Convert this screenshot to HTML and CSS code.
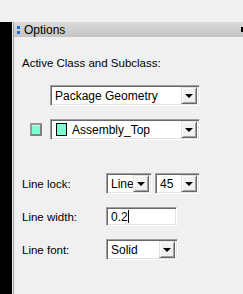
FILE: index.html
```html
<!DOCTYPE html>
<html lang="en">
<head>
  <meta charset="UTF-8" />
  <title>Options</title>
  <link rel="stylesheet" href="styles.css">
</head>
<body>
  <div class="topbar"></div>
  <div class="main">
    <div class="sidebar"></div>
    <div class="divider"></div>
    <div class="panel">
      <div class="panel-header">
        <span class="grip"><i></i><i></i></span>
        <span class="title">Options</span>
        <span class="pin"></span>
      </div>

      <div class="panel-body">
        <p class="section-label">Active Class and Subclass:</p>

        <div class="class-row">
          <div class="combo combo-wide">
            <span class="combo-text">Package Geometry</span>
            <span class="combo-btn"><b></b></span>
          </div>
        </div>

        <div class="class-row subclass-row">
          <span class="swatch-btn"><span></span></span>
          <div class="combo combo-wide">
            <span class="chip"></span>
            <span class="combo-text">Assembly_Top</span>
            <span class="combo-btn"><b></b></span>
          </div>
        </div>

        <div class="form">
          <label>Line lock:</label>
          <div class="controls">
            <div class="combo combo-lock">
              <span class="combo-text">Line</span>
              <span class="combo-btn"><b></b></span>
            </div>
            <div class="combo combo-angle">
              <span class="combo-text">45</span>
              <span class="combo-btn"><b></b></span>
            </div>
          </div>

          <label>Line width:</label>
          <div class="controls">
            <div class="textbox"><span>0.2</span><span class="caret"></span></div>
          </div>

          <label>Line font:</label>
          <div class="controls">
            <div class="combo combo-font">
              <span class="combo-text">Solid</span>
              <span class="combo-btn"><b></b></span>
            </div>
          </div>
        </div>
      </div>
    </div>
  </div>
</body>
</html>
```

FILE: styles.css
```css
html, body {
  margin: 0;
  padding: 0;
}
body {
  width: 243px;
  height: 294px;
  overflow: hidden;
  background: #f0f0f0;
  font-family: "Liberation Sans", Arial, sans-serif;
  font-size: 11px;
  color: #000;
}
.topbar {
  height: 22px;
}
.main {
  display: flex;
  height: 272px;
}
.sidebar {
  width: 12px;
  background: #000;
}
.divider {
  width: 1px;
  border-left: 1px solid #f0f0f0;
  background: #a0a0a0;
}
.panel {
  flex: 1;
  display: flex;
  flex-direction: column;
}
.panel-header {
  height: 15px;
  display: flex;
  align-items: center;
  background: linear-gradient(#dadada, #c4c4c4);
}
.grip {
  display: flex;
  flex-direction: column;
  gap: 2px;
  margin-left: 3px;
  width: 3px;
}
.grip i {
  display: block;
  width: 3px;
  height: 3px;
  background: #1c6ee0;
}
.title {
  margin-left: 4px;
  font-size: 12px;
  flex: 1;
}
.pin {
  width: 2px;
  height: 4px;
  border-top: 1px solid #000;
  background: #000;
}
.panel-body {
  padding-left: 8px;
}
.section-label {
  margin: 20px 0 0;
  font-size: 11.5px;
  line-height: 13px;
}
.class-row {
  display: flex;
  align-items: center;
  margin-top: 15px;
  padding-left: 28px;
}
.subclass-row {
  margin-top: 13px;
  padding-left: 8px;
}
.swatch-btn {
  width: 12px;
  height: 13px;
  box-sizing: border-box;
  border: 2px solid;
  border-color: #9a9a9a #808080 #808080 #9a9a9a;
  background: #7fffd4;
  margin-right: 8px;
}
.swatch-btn span {
  display: block;
  height: 100%;
  border-top: 1px solid #c8f5e6;
  box-sizing: border-box;
}
.combo {
  height: 21px;
  box-sizing: border-box;
  border: 1px solid;
  border-color: #a0a0a0 #fff #fff #a0a0a0;
  box-shadow: inset 1px 1px #696969, inset -1px -1px #e3e3e3;
  background: #fff;
  display: flex;
  align-items: center;
  padding: 2px;
}
.combo-wide {
  width: 150px;
}
.combo-text {
  flex: 1;
  padding-left: 2px;
  font-size: 12px;
  white-space: nowrap;
  overflow: hidden;
}
.chip {
  width: 11px;
  height: 13px;
  box-sizing: border-box;
  border: 1px solid #000;
  background: #7fffd4;
  margin-left: 3px;
  margin-right: 3px;
}
.combo-btn {
  width: 16px;
  height: 17px;
  box-sizing: border-box;
  border: 1px solid;
  border-color: #e3e3e3 #696969 #696969 #e3e3e3;
  box-shadow: inset 1px 1px #fff, inset -1px -1px #a0a0a0;
  background: #f0f0f0;
  display: flex;
  align-items: center;
  justify-content: center;
}
.combo-btn b {
  width: 0;
  height: 0;
  border-left: 4px solid transparent;
  border-right: 4px solid transparent;
  border-top: 4px solid #000;
  margin-top: 1px;
}
.form {
  display: grid;
  grid-template-columns: 84px 1fr;
  row-gap: 13px;
  align-items: center;
  margin-top: 33px;
}
.form label {
  font-size: 11.5px;
}
.controls {
  display: flex;
  gap: 3px;
}
.combo-lock {
  width: 46px;
}
.combo-angle {
  width: 45px;
}
.combo-font {
  width: 72px;
}
.textbox {
  width: 71px;
  height: 19px;
  box-sizing: border-box;
  border: 1px solid;
  border-color: #a0a0a0 #fff #fff #a0a0a0;
  box-shadow: inset 1px 1px #696969, inset -1px -1px #e3e3e3;
  background: #fff;
  display: flex;
  align-items: center;
  padding-left: 4px;
  font-size: 12px;
}
.caret {
  width: 1px;
  height: 13px;
  background: #000;
}
```
